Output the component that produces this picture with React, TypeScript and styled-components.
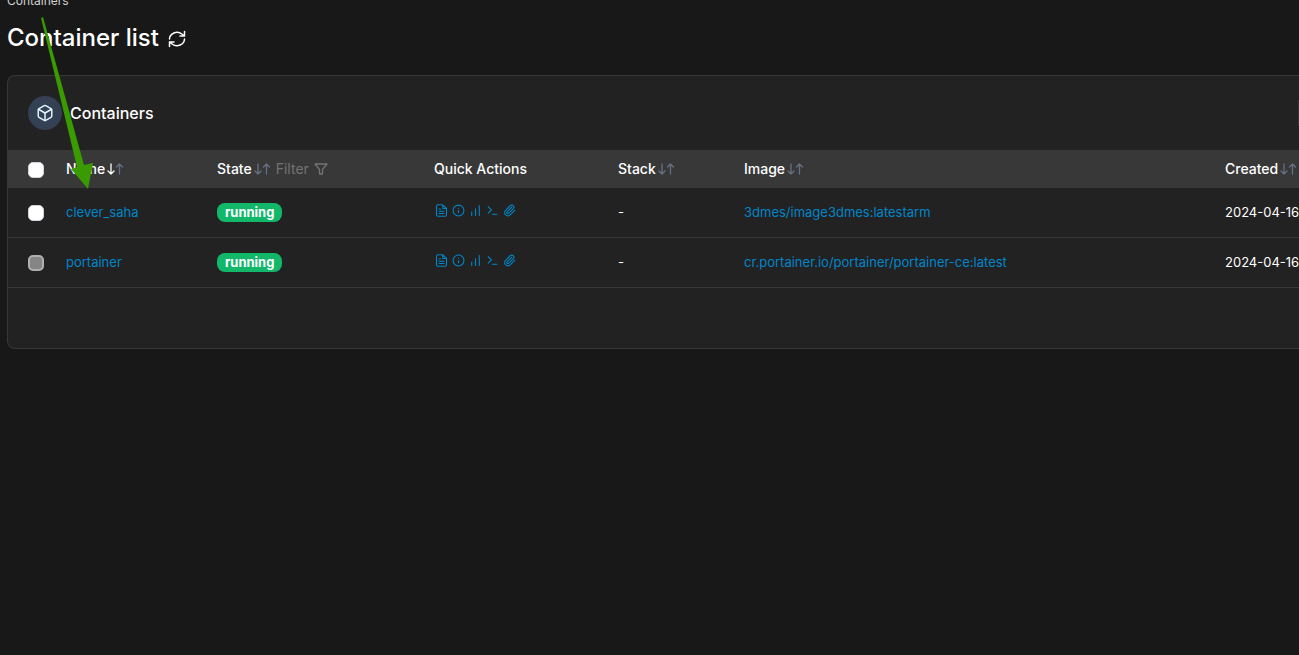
import React from "react";
import styled, { createGlobalStyle } from "styled-components";
import {
  Box,
  ChartNoAxesColumnIncreasing,
  Info,
  Paperclip,
  Terminal,
} from "lucide-react";

const GlobalStyle = createGlobalStyle`
  * { box-sizing: border-box; }
  body {
    margin: 0;
    background: #181818;
    color: #fff;
    font-family: Inter, "Liberation Sans", sans-serif;
    font-size: 14px;
    line-height: 20px;
  }
`;

const Page = styled.main`
  position: relative;
  min-height: 100vh;
  padding-left: 7px;
  overflow: hidden;
`;

const Breadcrumb = styled.nav`
  display: flex;
  align-items: flex-end;
  height: 9px;
  font-size: 12px;
  line-height: 16px;
  color: #d0d0d0;
`;

const TitleRow = styled.header`
  display: flex;
  align-items: center;
  gap: 9px;
  height: 58px;
  margin-bottom: 8px;
`;

const Title = styled.h1`
  margin: 0;
  font-size: 24px;
  line-height: 32px;
  font-weight: 500;
`;

const IconButton = styled.button`
  display: inline-flex;
  align-items: center;
  padding: 0;
  border: 0;
  background: none;
  color: inherit;
  font: inherit;
  cursor: pointer;
`;

const RefreshButton = styled(IconButton)`
  padding-top: 2px;
`;

const Card = styled.section`
  border: 1px solid #383838;
  border-right: 0;
  border-radius: 8px 0 0 8px;
  background: #222;
  overflow: hidden;
`;

const CardHeader = styled.div`
  display: flex;
  align-items: center;
  gap: 8px;
  height: 74px;
  padding-left: 20px;
`;

const Badge = styled.span`
  display: flex;
  align-items: center;
  justify-content: center;
  width: 34px;
  height: 34px;
  border-radius: 50%;
  background: #344054;
  color: #e0f2fe;
`;

const CardTitle = styled.h2`
  margin: 0;
  font-size: 16px;
  line-height: 24px;
  font-weight: 500;
`;

const SearchEdge = styled.div`
  width: 1px;
  height: 26px;
  margin-left: auto;
  background: #383838;
`;

const Table = styled.table`
  width: 100%;
  table-layout: fixed;
  border-collapse: separate;
  border-spacing: 0;
`;

const Col = styled.col<{ $width?: number }>`
  width: ${(p) => (p.$width ? `${p.$width}px` : "auto")};
`;

const HeadCell = styled.th`
  height: 38px;
  padding: 0 0 0 10px;
  background: #383838;
  font-weight: 500;
  text-align: left;
  white-space: nowrap;
  &:first-child { padding: 2px 0 0 20px; }
`;

const HeadContent = styled.div`
  display: flex;
  align-items: center;
`;

const SortButton = styled(IconButton)`
  gap: 2px;
`;

const FilterButton = styled(IconButton)`
  gap: 5px;
  margin-left: 5px;
  color: #737373;
  font-weight: 400;
`;

const Cell = styled.td`
  height: 50px;
  padding: 0 0 2px 10px;
  border-bottom: 1px solid #383838;
  font-size: 13px;
  white-space: nowrap;
  &:first-child { padding: 0 0 0 20px; }
`;

const Check = styled.input`
  display: block;
  appearance: none;
  width: 16px;
  height: 16px;
  margin: 0;
  border: 1px solid #d0d5dd;
  border-radius: 5px;
  background: #fff;
  &:disabled {
    border: 2px solid #b0b0b0;
    background: #858585;
  }
`;

const Link = styled.a`
  color: #0086c9;
  text-decoration: none;
`;

const Status = styled.span`
  display: inline-block;
  padding: 0 8px;
  border-radius: 8px;
  background: #12b76a;
  line-height: 19px;
  font-weight: 700;
`;

const Actions = styled.div`
  display: flex;
  gap: 4px;
  padding: 0 0 2px 1px;
`;

const ActionLink = styled(Link)`
  display: flex;
`;

const CardFooter = styled.div`
  height: 60px;
`;

const Pointer = styled.svg`
  position: absolute;
  top: 0;
  left: 0;
  pointer-events: none;
`;

function Sortable({ label, active }: { label: string; active?: boolean }) {
  return (
    <SortButton type="button">
      {label}
      <svg width="17" height="12" viewBox="0 0 17 12" fill="none" strokeWidth="1.3" strokeLinecap="round" strokeLinejoin="round" aria-hidden="true">
        <path d="M4 1V11M1 8L4 11L7 8" stroke={active ? "#fff" : "#667085"} />
        <path d="M12.5 11V1M9.5 4L12.5 1L15.5 4" stroke="#667085" />
      </svg>
    </SortButton>
  );
}

function RefreshIcon() {
  return (
    <svg width="18" height="18" viewBox="0 0 24 24" fill="none" stroke="currentColor" strokeWidth="2" strokeLinecap="round" strokeLinejoin="round" aria-hidden="true">
      <path d="M22 2v6h-6M2 12a10 9 0 0 1 16.5-6.7L22 8M2 22v-6h6M22 12a10 9 0 0 1-16.5 6.7L2 16" />
    </svg>
  );
}

function FilterIcon() {
  return (
    <svg width="14" height="12" viewBox="0 0 14 12" fill="none" stroke="currentColor" strokeWidth="1.3" strokeLinejoin="round" aria-hidden="true">
      <path d="M1 1H13L8.5 6.5V11H5.5V6.5Z" />
    </svg>
  );
}

function LogsIcon({ size }: { size: number }) {
  return (
    <svg width={size} height={size} viewBox="0 0 13 13" fill="none" stroke="currentColor" strokeWidth="1.1" strokeLinecap="round" strokeLinejoin="round" aria-hidden="true">
      <path d="M7.8 .8H3Q1.5 .8 1.5 2.3V10.7Q1.5 12.2 3 12.2H10Q11.5 12.2 11.5 10.7V4.5ZV4.5H11.5M4 5H5.5M4 7.2H9M4 9.5H9" />
    </svg>
  );
}

const containers = [
  { name: "clever_saha", image: "3dmes/image3dmes:latestarm", locked: false },
  { name: "portainer", image: "cr.portainer.io/portainer/portainer-ce:latest", locked: true },
];

const actions = [
  { label: "Logs", Icon: LogsIcon },
  { label: "Inspect", Icon: Info },
  { label: "Stats", Icon: ChartNoAxesColumnIncreasing },
  { label: "Console", Icon: Terminal },
  { label: "Attach", Icon: Paperclip },
];

export default function App() {
  return (
    <Page>
      <GlobalStyle />
      <Breadcrumb aria-label="Breadcrumb">Containers</Breadcrumb>
      <TitleRow>
        <Title>Container list</Title>
        <RefreshButton type="button" aria-label="Refresh">
          <RefreshIcon />
        </RefreshButton>
      </TitleRow>
      <Card>
        <CardHeader>
          <Badge><Box size={18} /></Badge>
          <CardTitle>Containers</CardTitle>
          <SearchEdge />
        </CardHeader>
        <Table>
          <colgroup>
            <Col $width={48} />
            <Col $width={151} />
            <Col $width={217} />
            <Col $width={184} />
            <Col $width={126} />
            <Col />
            <Col $width={84} />
          </colgroup>
          <thead>
            <tr>
              <HeadCell><Check type="checkbox" aria-label="Select all" /></HeadCell>
              <HeadCell><Sortable label="Name" active /></HeadCell>
              <HeadCell>
                <HeadContent>
                  <Sortable label="State" />
                  <FilterButton type="button">Filter<FilterIcon /></FilterButton>
                </HeadContent>
              </HeadCell>
              <HeadCell>Quick Actions</HeadCell>
              <HeadCell><Sortable label="Stack" /></HeadCell>
              <HeadCell><Sortable label="Image" /></HeadCell>
              <HeadCell><Sortable label="Created" /></HeadCell>
            </tr>
          </thead>
          <tbody>
            {containers.map((c) => (
              <tr key={c.name}>
                <Cell><Check type="checkbox" aria-label={`Select ${c.name}`} disabled={c.locked} /></Cell>
                <Cell><Link href="#">{c.name}</Link></Cell>
                <Cell><Status>running</Status></Cell>
                <Cell>
                  <Actions>
                    {actions.map(({ label, Icon }) => (
                      <ActionLink key={label} href="#" aria-label={label}><Icon size={13} /></ActionLink>
                    ))}
                  </Actions>
                </Cell>
                <Cell>-</Cell>
                <Cell><Link href="#">{c.image}</Link></Cell>
                <Cell>2024-04-16</Cell>
              </tr>
            ))}
          </tbody>
        </Table>
        <CardFooter />
      </Card>
      <Pointer width="100" height="192" viewBox="0 0 100 192" aria-hidden="true">
        <path d="M41 18 L43 17 L84 165 L93 163 L88 189 L71 169 L77 167 Z" fill="#399b00" />
      </Pointer>
    </Page>
  );
}
